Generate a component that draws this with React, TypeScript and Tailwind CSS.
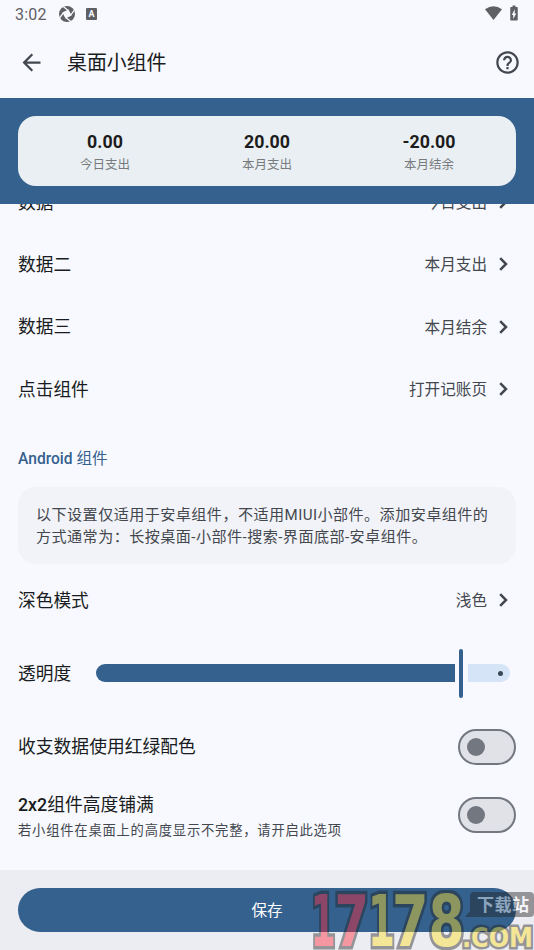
import React from "react";
import {
  MdArrowBack,
  MdBatteryChargingFull,
  MdHelpOutline,
} from "react-icons/md";
import { clsx } from "clsx";

const stats = [
  { value: "0.00", label: "今日支出" },
  { value: "20.00", label: "本月支出" },
  { value: "-20.00", label: "本月结余" },
];

const dataRows = [
  { title: "数据一", value: "今日支出" },
  { title: "数据二", value: "本月支出" },
  { title: "数据三", value: "本月结余" },
  { title: "点击组件", value: "打开记账页" },
];

const logoDigits = [
  { char: "1", x: 0.7, width: 25, fill: "#ff2738" },
  { char: "7", x: 24.5, width: 34.5, fill: "#ff2738" },
  { char: "1", x: 58, width: 27, fill: "#ffdd21" },
  { char: "7", x: 82, width: 36.5, fill: "#ffdd21" },
  { char: "8", x: 118.5, width: 36, fill: "#ffdd21" },
];

const StatusBar = () => (
  <div className="flex h-7 items-center justify-between pr-[15px] pl-[15px] text-[#5f6063]">
    <div className="flex items-center">
      <span className="w-[32px] pt-px text-[16px] leading-none tracking-[0.2px]">
        3:02
      </span>
      <svg viewBox="0 0 16 16" className="ml-3 size-4">
        <circle
          cx="8"
          cy="8"
          r="5.5"
          fill="none"
          stroke="currentColor"
          strokeWidth="5"
        />
        <path
          d="M8 3.2 12.8 8 8 12.8 3.2 8z"
          fill="#f8f9ff"
          transform="rotate(18 8 8)"
        />
        <path
          d="M4.2 0.6 9.2 4.4M15.4 4.2 11.6 9.2M11.8 15.4 6.8 11.6M0.6 11.8 4.4 6.8"
          stroke="#f8f9ff"
          strokeWidth="1.3"
        />
      </svg>
      <span className="ml-[11px] flex h-3 w-[11px] items-center justify-center rounded-[1px] bg-[#5f6063] text-[9px] leading-none font-bold text-[#f8f9ff]">
        A
      </span>
    </div>
    <div className="flex items-center gap-[3px] pb-[2px]">
      <svg viewBox="0 0 17 14" className="h-[14px] w-[17px]">
        <path d="M0 3.2Q8.500-2.800 17 3.200L8.500 14z" fill="currentColor" />
      </svg>
      <MdBatteryChargingFull className="-mr-1 size-[18px]" />
    </div>
  </div>
);

const Chevron = () => (
  <svg viewBox="0 0 9 14" className="mb-[2px] ml-[12px] h-[14px] w-[9px]">
    <path
      d="M1.2 1.2 7 7 1.2 12.8"
      fill="none"
      stroke="#43474e"
      strokeWidth="2.5"
    />
  </svg>
);

type SettingRowProps = {
  title: string;
  value: string;
  className?: string;
};

const SettingRow = ({ title, value, className }: SettingRowProps) => (
  <div
    className={clsx(
      "flex h-[62.3px] items-center justify-between pt-[2px] pr-[26px] pl-[18px]",
      className
    )}
  >
    <span className="text-[17.7px]">{title}</span>
    <div className="flex items-center text-[15.6px] text-[#43474e]">
      <span className="pt-px">{value}</span>
      <Chevron />
    </div>
  </div>
);

const Switch = () => (
  <button
    type="button"
    role="switch"
    aria-checked={false}
    className="flex h-9 w-[58px] items-center rounded-full border-2 border-[#73777f] bg-[#e1e2e8] pl-[7px]"
  >
    <span className="size-[18px] rounded-full bg-[#73777f]" />
  </button>
);

const OpacitySlider = () => (
  <div className="flex h-[49px] flex-1 items-center">
    <div className="h-[18px] w-[359px] rounded-l-full rounded-r-[2px] bg-[#35618e]" />
    <div className="ml-[4px] h-[49px] w-[4.5px] rounded-full bg-[#35618e]" />
    <div className="ml-[4.500px] flex h-[18px] w-[42px] items-center justify-end rounded-l-[2px] rounded-r-full bg-[#d6e4f7] pr-[7px]">
      <span className="size-[5px] rounded-full bg-[#3b4858]" />
    </div>
  </div>
);

const Watermark = () => (
  <svg
    viewBox="0 0 224 60"
    className="pointer-events-none absolute right-0 bottom-0 h-[60px] w-[224px] opacity-[0.43]"
    fontFamily="'DejaVu Sans', sans-serif"
    fontWeight="bold"
  >
    <g
      stroke="#222222"
      strokeWidth="7"
      paintOrder="stroke"
      strokeLinejoin="miter"
      fontSize="71"
    >
      {logoDigits.map((digit) => (
        <text
          key={digit.x}
          x={digit.x}
          y="56"
          textLength={digit.width}
          lengthAdjust="spacingAndGlyphs"
          fill={digit.fill}
        >
          {digit.char}
        </text>
      ))}
      <text
        x="152"
        y="57"
        fontSize="26"
        strokeWidth="5"
        textLength="71"
        lengthAdjust="spacingAndGlyphs"
        fill="#ffdd21"
      >
        .COM
      </text>
    </g>
    <path
      d="M164 2h56q4 0 4 4v17q0 4-4 4h-52l-13 0 5-6V6q0-4 4-4z"
      fill="#222222"
    />
    <text
      x="167"
      y="21"
      fontSize="17"
      textLength="52"
      fill="#ffffff"
      fontFamily="'Noto Sans CJK SC', sans-serif"
    >
      下载站
    </text>
  </svg>
);

const App = () => {
  return (
    <div className="relative flex h-[950px] w-[534px] flex-col overflow-hidden bg-[#f8f9ff] font-['Roboto','Noto_Sans_CJK_SC',sans-serif] text-[#191c20]">
      <StatusBar />
      <header className="flex h-[70px] items-center pr-[13.5px] pb-px pl-[18px]">
        <MdArrowBack className="size-[27px] text-[#43474e]" />
        <h1 className="ml-[22px] flex-1 pt-[2px] text-[19.9px]">桌面小组件</h1>
        <MdHelpOutline className="size-[27px] text-[#43474e]" />
      </header>

      <section className="z-10 h-[106px] shrink-0 bg-[#35618e] p-[18px]">
        <div className="grid h-[70px] grid-cols-3 items-center rounded-[18px] bg-[#eaeff3] px-[6px] pt-[4px]">
          {stats.map((stat) => (
            <div key={stat.label} className="flex flex-col items-center">
              <span className="text-[17.8px] leading-[22px] font-bold text-[#1c1c1c]">
                {stat.value}
              </span>
              <span className="text-[12.5px] leading-[23px] text-[#777b7e]">
                {stat.label}
              </span>
            </div>
          ))}
        </div>
      </section>

      <main className="-mt-[33px] flex-1">
        {dataRows.map((row) => (
          <SettingRow key={row.title} title={row.title} value={row.value} />
        ))}

        <h2 className="mt-[27px] px-[18px] text-[15.6px] leading-6 font-medium text-[#35618e]">
          Android <span className="font-normal">组件</span>
        </h2>
        <p className="mx-[18px] mt-4 h-[77px] rounded-[18px] bg-[#f2f3f8] px-[18px] pt-[17px] text-[15.1px] leading-[22px] tracking-[0.44px] text-[#43474e]">
          以下设置仅适用于安卓组件，不适用MIUI小部件。添加安卓组件的
          <br />
          方式通常为：长按桌面-小部件-搜索-界面底部-安卓组件。
        </p>

        <SettingRow title="深色模式" value="浅色" className="mt-[5px]" />

        <div className="mt-[17.5px] flex items-center pr-[18px] pl-[18px]">
          <span className="w-[77.5px] pt-px text-[17.7px]">透明度</span>
          <OpacitySlider />
        </div>

        <div className="mt-[31px] flex h-9 items-center justify-between px-[18px]">
          <span className="pt-px text-[17.8px]">收支数据使用红绿配色</span>
          <Switch />
        </div>

        <div className="mt-6 flex h-[52px] items-center justify-between px-[18px]">
          <div className="pt-[5px]">
            <div className="text-[17.8px] leading-[26px] font-medium">
              2x2<span className="font-normal">组件高度铺满</span>
            </div>
            <div className="text-[13.3px] leading-[25px] tracking-[0.78px] text-[#43474e]">
              若小组件在桌面上的高度显示不完整，请开启此选项
            </div>
          </div>
          <Switch />
        </div>
      </main>

      <footer className="h-20 shrink-0 bg-[#ecedf3] px-[18px] pt-[18px]">
        <button
          type="button"
          className="h-[44px] w-full rounded-full bg-[#35618e] pt-[3px] text-[15.6px] text-white"
        >
          保存
        </button>
      </footer>
      <Watermark />
    </div>
  );
};

export default App;
